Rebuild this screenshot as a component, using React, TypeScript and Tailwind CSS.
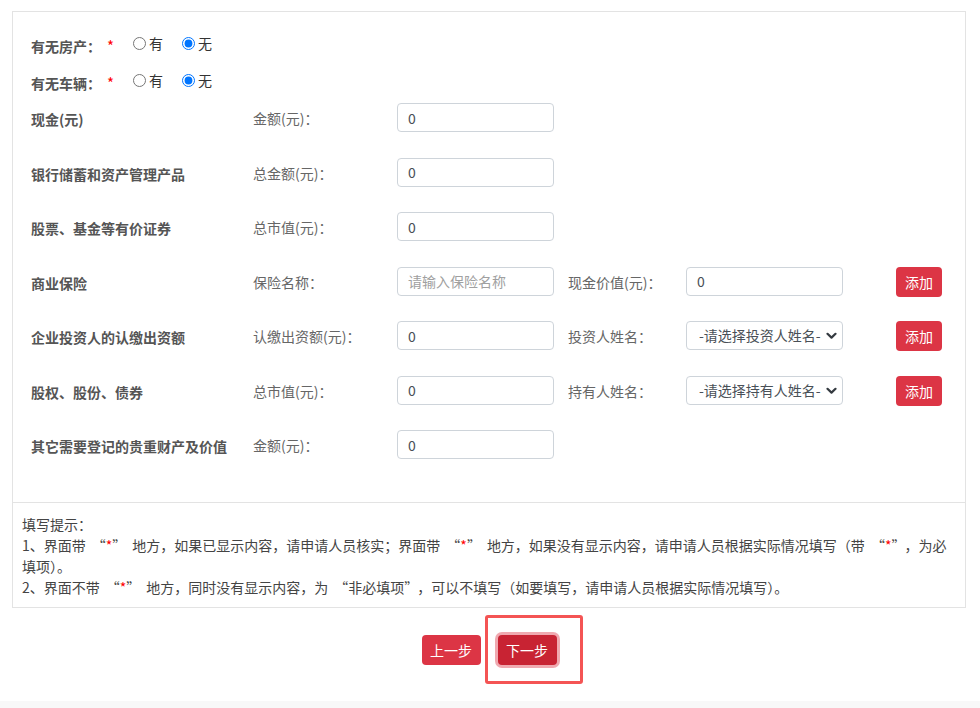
import React from "react";

const font = { fontFamily: '"Noto Sans CJK SC", "Liberation Sans", sans-serif' };

function Chevron() {
  return (
    <svg width="11" height="8" viewBox="0 0 11 8" className="absolute right-[6px] top-[11px] pointer-events-none">
      <path d="M1.5 1.8 L5.5 5.6 L9.5 1.8" fill="none" stroke="#343a40" strokeWidth="2.2" strokeLinecap="round" strokeLinejoin="round" />
    </svg>
  );
}

function TextInput({ value, placeholder }: { value?: string; placeholder?: string }) {
  return (
    <input
      type="text"
      defaultValue={value}
      placeholder={placeholder}
      className="w-[157px] h-[29px] border border-[#ced4da] rounded-[4px] px-[10px] text-[14px] text-[#495057] placeholder:text-[#a0a0a0] bg-white outline-none"
      style={font}
    />
  );
}

function Select({ text }: { text: string }) {
  return (
    <div className="relative w-[157px] h-[29px]">
      <select
        className="appearance-none w-full h-full border border-[#ced4da] rounded-[4px] pl-[12px] pr-[20px] text-[14px] text-[#495057] bg-white outline-none"
        style={font}
        defaultValue="0"
      >
        <option value="0">{text}</option>
      </select>
      <Chevron />
    </div>
  );
}

function AddBtn() {
  return (
    <button className="ml-[53px] w-[46px] h-[30px] rounded-[4px] bg-[#dc3545] text-white text-[14px] leading-[30px]" style={font}>
      添加
    </button>
  );
}

type Row = {
  label: string;
  sub: string;
  input: React.ReactNode;
  sub2?: string;
  input2?: React.ReactNode;
  add?: boolean;
};

const rows: Row[] = [
  { label: "现金(元)", sub: "金额(元)：", input: <TextInput value="0" /> },
  { label: "银行储蓄和资产管理产品", sub: "总金额(元)：", input: <TextInput value="0" /> },
  { label: "股票、基金等有价证券", sub: "总市值(元)：", input: <TextInput value="0" /> },
  {
    label: "商业保险",
    sub: "保险名称：",
    input: <TextInput placeholder="请输入保险名称" />,
    sub2: "现金价值(元)：",
    input2: <TextInput value="0" />,
    add: true,
  },
  {
    label: "企业投资人的认缴出资额",
    sub: "认缴出资额(元)：",
    input: <TextInput value="0" />,
    sub2: "投资人姓名：",
    input2: <Select text="-请选择投资人姓名-" />,
    add: true,
  },
  {
    label: "股权、股份、债券",
    sub: "总市值(元)：",
    input: <TextInput value="0" />,
    sub2: "持有人姓名：",
    input2: <Select text="-请选择持有人姓名-" />,
    add: true,
  },
  { label: "其它需要登记的贵重财产及价值", sub: "金额(元)：", input: <TextInput value="0" /> },
];

function RadioRow({ label, name }: { label: string; name: string }) {
  return (
    <div className="h-[37px] flex items-start">
      <div className="w-[102px] pt-[10px] leading-[20px] text-[14px] font-bold text-[#555]">
        {label}：<span className="text-[#ff0000] font-normal text-[15px] ml-[6px]">*</span>
      </div>
      <label className="flex items-center pt-[7px] leading-[20px] text-[14px] text-[#333]">
        <input type="radio" name={name} className="m-0 w-[13px] h-[13px]" />
        <span className="ml-[3px]">有</span>
      </label>
      <label className="flex items-center ml-[19px] pt-[7px] leading-[20px] text-[14px] text-[#333]">
        <input type="radio" name={name} defaultChecked className="m-0 w-[13px] h-[13px]" />
        <span className="ml-[3px]">无</span>
      </label>
    </div>
  );
}

const L = () => <span className="ml-[6px]">“</span>;
const R = () => <span className="mr-[6px]">”</span>;
const Star = () => <span className="text-[#ff0000]">*</span>;

export default function App() {
  return (
    <div className="min-h-[708px] bg-white flex flex-col" style={font}>
      <div className="ml-[12px] mt-[11px] w-[954px] border border-[#e3e3e3]">
        <div className="pl-[18px] pt-[14px] pb-[43px]">
          <RadioRow label="有无房产" name="house" />
          <RadioRow label="有无车辆" name="car" />
          <div className="pt-[3px] flex flex-col gap-[25.5px]">
            {rows.map((r) => (
              <div key={r.label} className="flex items-start h-[29px]">
                <div className="w-[222px] pt-[6px] leading-[20px] text-[14px] font-bold text-[#555] whitespace-nowrap">
                  {r.label}
                </div>
                <div className="w-[144px] pt-[5px] leading-[20px] text-[14px] text-[#666] whitespace-nowrap">{r.sub}</div>
                {r.input}
                {r.sub2 && (
                  <div className="w-[118px] ml-[14px] pt-[5px] leading-[20px] text-[14px] text-[#666] whitespace-nowrap">
                    {r.sub2}
                  </div>
                )}
                {r.input2}
                {r.add && <AddBtn />}
              </div>
            ))}
          </div>
        </div>
        <div className="border-t border-[#e3e3e3] px-[9px] pt-[11px] pb-[9px] text-[14px] leading-[21px] text-[#444]">
          <div>填写提示：</div>
          <div className="whitespace-nowrap">
            1、界面带<L />
            <Star />
            <R />地方，如果已显示内容，请申请人员核实；界面带<L />
            <Star />
            <R />地方，如果没有显示内容，请申请人员根据实际情况填写（带<L />
            <Star />
            <R />，为必
            <br />
            填项）。
          </div>
          <div>
            2、界面不带<L />
            <Star />
            <R />地方，同时没有显示内容，为<L />非必填项<R />，可以不填写（如要填写，请申请人员根据实际情况填写）。
          </div>
        </div>
      </div>
      <div className="ml-[12px] w-[954px] mt-[27px] flex justify-center gap-[17px]">
        <button className="w-[59px] h-[30px] rounded-[4px] bg-[#dc3545] text-white text-[14px] leading-[30px]" style={font}>
          上一步
        </button>
        <span className="relative">
          <button
            className="w-[59px] h-[30px] rounded-[4px] bg-[#c82333] text-white text-[14px] leading-[30px] shadow-[0_0_0_3px_rgba(225,83,97,0.5)]"
            style={font}
          >
            下一步
          </button>
          <span className="absolute -left-[13px] -right-[26px] -top-[20px] -bottom-[19px] border-[3px] border-[#f45454] rounded-[3px] pointer-events-none" />
        </span>
      </div>
      <div className="mt-auto h-[7px] bg-[#f8f8f8]" />
    </div>
  );
}
